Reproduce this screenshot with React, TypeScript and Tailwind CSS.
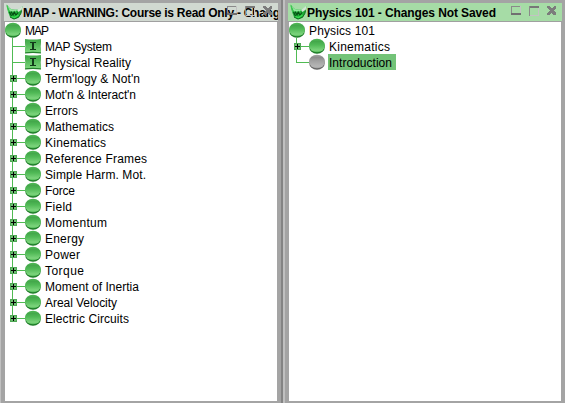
import React from "react";

const FONT = "font-['Liberation_Sans',Arial,sans-serif]";

function Ball({ gray = false }: { gray?: boolean }) {
  const id = gray ? "ballGray" : "ballGreen";
  const c = gray ? ["#8c8c8c", "#a2a2a2", "#b6b6b6", "#686868"] : ["#44a84b", "#50b956", "#7cd47c", "#1f7d29"];
  return (
    <svg width="16" height="16" viewBox="0 0 16 16" className="block shrink-0">
      <defs>
        <linearGradient id={id} x1="0" y1="0" x2="0" y2="1">
          <stop offset="0" stopColor={c[1]} />
          <stop offset="0.2" stopColor={c[0]} />
          <stop offset="0.45" stopColor={c[1]} />
          <stop offset="0.85" stopColor={c[2]} />
          <stop offset="1" stopColor={c[1]} />
        </linearGradient>
      </defs>
      <rect x="0.2" y="2" width="15.6" height="13.7" rx="7.6" ry="6.8" fill={c[3]} />
      <rect x="0" y="0.8" width="16" height="13.5" rx="7.8" ry="6.7" fill={`url(#${id})`} />
    </svg>
  );
}

function Info() {
  return (
    <svg width="16" height="16" viewBox="0 0 16 16" className="block shrink-0">
      <defs>
        <linearGradient id="infoGreen" x1="0" y1="0" x2="0" y2="1">
          <stop offset="0" stopColor="#3fa747" />
          <stop offset="0.4" stopColor="#52b757" />
          <stop offset="1" stopColor="#7bd67b" />
        </linearGradient>
      </defs>
      <path d="M0 2.2Q8 3.2 16 2.2L15.4 8.5L16 15.4Q8 14.6 0 15.4L0.6 8.5Z" fill="#23802b" />
      <path d="M0 1Q8 2.2 16 1Q14.8 7.5 16 14.2Q8 13.4 0 14.2Q1.2 7.5 0 1Z" fill="url(#infoGreen)" />
      <path d="M5 4H11V5H9V11H11V12H5V11H7V5H5Z" fill="#123a1a" />
    </svg>
  );
}

type Kind = "info" | "ball" | "gray";

function Branch({ label, kind = "ball", plus = true, last = false, selected = false, w }: {
  label: string; kind?: Kind; plus?: boolean; last?: boolean; selected?: boolean; w: number;
}) {
  return (
    <div className="flex h-4">
      <svg width="20" height="16" viewBox="0 0 20 16" className="block shrink-0" shapeRendering="crispEdges">
        <rect x="7" y="0" width="1" height={last ? 9 : 16} fill="#50bb53" />
        <rect x="7" y="8" width="13" height="1" fill="#50bb53" />
        {plus && (
          <g>
            <rect x="5" y="5" width="7" height="7" fill="#4fa855" />
            <rect x="6" y="6" width="5" height="5" fill="#6cc070" />
            <rect x="6" y="8" width="5" height="1" fill="#000" />
            <rect x="8" y="6" width="1" height="5" fill="#000" />
          </g>
        )}
      </svg>
      {kind === "info" ? <Info /> : <Ball gray={kind === "gray"} />}
      <Label text={label} w={w} selected={selected} />
    </div>
  );
}

function Label({ text, w, selected = false }: { text: string; w: number; selected?: boolean }) {
  return (
    <span className={`ml-[3px] h-4 pl-px pr-[4px] ${selected ? "bg-[#73c378]" : ""}`}>
      <svg width={w} height="16" className="block overflow-visible">
        <text x="0" y="13" textLength={w} fontSize="12" fill="#000">{text}</text>
      </svg>
    </span>
  );
}

function Crest() {
  return (
    <svg width="17" height="16" viewBox="0 0 17 16" className="-mt-px block shrink-0">
      <path d="M0.5 0.5L2.5 9L4 13L8 15.2L12.5 13.5L15 9.5L16.5 2L12 5.5Q7 6.5 4 4.5Z" fill="#1fae38" />
      <path d="M0.5 0.5L4 4.5Q7 6.5 12 5.5L9.5 7.5L4 7.5Z" fill="#8fe89a" />
      <path d="M11 6L16.5 1.5L15.8 5.5L12.5 8Z" fill="#d3e6d5" />
      <path d="M1 1.5L3 9" stroke="#3fc653" strokeWidth="1.2" fill="none" />
      <path d="M3.5 8L5.5 12M5 7.5L7 11L8.2 8L10 11L12 8.5" stroke="#064a12" strokeWidth="1.1" fill="none" />
      <path d="M4 13L8 15L12.5 13.3L14.8 9.5L15.5 6.5" stroke="#0a6d1c" strokeWidth="1" fill="none" />
      <path d="M5.5 12.5L8.5 13.5L12.5 11" stroke="#3ae052" strokeWidth="1.2" fill="none" />
    </svg>
  );
}

function Controls() {
  return (
    <svg width="50" height="12" viewBox="0 0 50 12" className="absolute right-[2px] top-[2px]" shapeRendering="crispEdges">
      <path d="M1.5 10V1.5H10" stroke="#8a8a8a" fill="none" />
      <path d="M10.5 1V10" stroke="#c3c3c3" fill="none" />
      <path d="M1 9H11" stroke="#707070" strokeWidth="2" />
      <path d="M19 2H29" stroke="#777777" strokeWidth="2" />
      <path d="M19.5 1V11" stroke="#8a8a8a" />
      <path d="M28.5 3V10.5H20" stroke="#c3c3c3" fill="none" />
      <path d="M37 1H40L42 4L44 1H46V3L43.5 5.5L46 8V10H43L41.5 7.5L39.5 10H37V8L40 5.5L37 3Z" fill="#7c7c7c" />
    </svg>
  );
}

function Panel({ title, w, active = false, children }: {
  title: string; w: number; active?: boolean; children: React.ReactNode;
}) {
  return (
    <section className="flex h-[398px] w-[274px] shrink-0 flex-col">
      <header className={`relative flex h-[18px] shrink-0 overflow-hidden pl-[2px] pt-[2px] ${active ? "bg-[#a6dca6]" : "bg-[#d1d9d1]"}`}>
        <Crest />
        <svg width={w} height="16" className="block shrink-0 overflow-visible">
          <text x="0" y="12" textLength={w} fontSize="12" fontWeight="700" fill="#000">{title}</text>
        </svg>
        <Controls />
      </header>
      <div className="h-px shrink-0 bg-[#a0a0a0]" />
      <div className="ml-px mr-px flex-1 bg-white">{children}</div>
    </section>
  );
}

function Root({ label, w }: { label: string; w: number }) {
  return (
    <div className="flex h-4">
      <Ball />
      <Label text={label} w={w} />
    </div>
  );
}

const topics: [string, number][] = [
  ["Term'logy & Not'n", 95], ["Mot'n & Interact'n", 91], ["Errors", 33], ["Mathematics", 69],
  ["Kinematics", 61], ["Reference Frames", 102], ["Simple Harm. Mot.", 101], ["Force", 30],
  ["Field", 27], ["Momentum", 62], ["Energy", 39], ["Power", 35], ["Torque", 39],
  ["Moment of Inertia", 94], ["Areal Velocity", 72], ["Electric Circuits", 84],
];

export default function App() {
  return (
    <main className={`flex h-[403px] w-[565px] overflow-hidden bg-[#a4a4a4] pt-[3px] ${FONT}`}>
      <div className="-mt-[3px] h-[403px] w-px bg-[#c0c0c0]" />
      <div className="w-[3px]" />
      <Panel title="MAP - WARNING: Course is Read Only - Chang" w={257}>
        <Root label="MAP" w={24} />
        <Branch label="MAP System" kind="info" plus={false} w={67} />
        <Branch label="Physical Reality" kind="info" plus={false} w={86} />
        {topics.map(([t, w], i) => (
          <Branch key={t} label={t} w={w} last={i === topics.length - 1} />
        ))}
      </Panel>
      <div className="-mt-[3px] flex h-[403px] w-[10px] shrink-0 pl-[3px]">
        <div className="w-[2px] bg-[#848484]" />
        <div className="w-[2px] bg-[#c0c0c0]" />
      </div>
      <Panel title="Physics 101 - Changes Not Saved" w={189} active>
        <Root label="Physics 101" w={66} />
        <Branch label="Kinematics" w={61} />
        <Branch label="Introduction" kind="gray" plus={false} last selected w={63} />
      </Panel>
    </main>
  );
}
